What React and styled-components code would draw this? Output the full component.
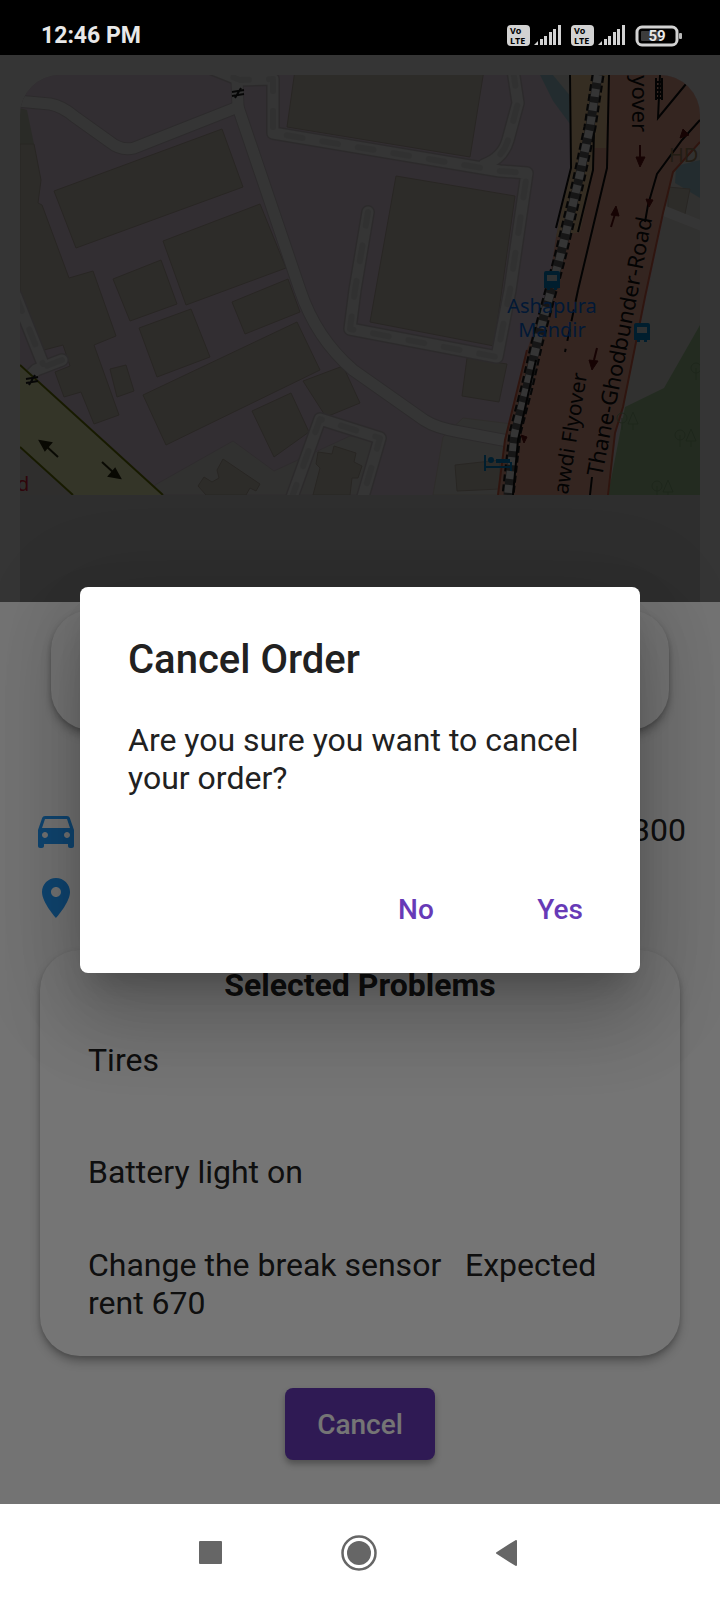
import React from "react";
import styled, { createGlobalStyle } from "styled-components";

const GlobalStyle = createGlobalStyle`
  * { box-sizing: border-box; }
  body {
    margin: 0;
    font-family: Roboto, "Liberation Sans", sans-serif;
    color: #212121;
  }
  h1, h2, p, ul { margin: 0; padding: 0; }
  ul { list-style: none; }
  button { font: inherit; border: 0; cursor: pointer; }
`;

const Screen = styled.div`
  min-height: 100vh;
  display: flex;
  flex-direction: column;
  background: #fff;
`;

const StatusBar = styled.header`
  display: flex;
  align-items: center;
  justify-content: space-between;
  height: 55px;
  padding: 16px 37px 0 41px;
  background: #000;
  color: #e8e8e8;
  font-size: 23px;
  font-weight: 700;
`;

const StatusIcons = styled.div`
  display: flex;
  align-items: center;
  gap: 9px;
`;

const SimGroup = styled.div`
  display: flex;
  align-items: center;
  gap: 4px;
`;

const Body = styled.main`
  position: relative;
  flex: 1;
  display: flex;
  flex-direction: column;
  overflow: hidden;
`;

const MapSection = styled.section`
  position: relative;
  padding: 20px 20px 0;
  background: #fafafa;
`;

const MapFrame = styled.div`
  overflow: hidden;
  border-radius: 40px 40px 0 0;
  background: #dddddd;
  padding-bottom: 107px;

  svg { display: block; width: 100%; height: auto; }
`;

const Veil = styled.div`
  position: absolute;
  inset: 0;
  background: rgba(0, 0, 0, 0.54);
`;

const Sheet = styled.section`
  flex: 1;
  display: flex;
  flex-direction: column;
  align-items: stretch;
  padding-top: 8px;
  background: #fafafa;
`;

const Card = styled.div`
  margin: 0 ${(p) => p.$inset}px;
  min-height: 120px;
  padding: ${(p) => p.$pad || 0}px 0;
  border-radius: 40px;
  background: #fff;
  box-shadow: 0 6px 10px rgba(0, 0, 0, 0.26), 0 2px 4px rgba(0, 0, 0, 0.14);
`;

const Details = styled.div`
  display: flex;
  flex-direction: column;
  gap: 20px;
  padding: 76px 34px 28px 32px;
`;

const DetailRow = styled.div`
  display: flex;
  align-items: center;
  justify-content: space-between;
  height: 48px;
  font-size: 32px;
`;

const BlueIcon = styled.svg`
  width: 48px;
  height: 48px;
  fill: #2196f3;
`;

const CardTitle = styled.h2`
  font-size: 32px;
  line-height: 38px;
  font-weight: 700;
  text-align: center;
`;

const Problem = styled.li`
  display: flex;
  align-items: center;
  min-height: 112px;
  padding: 0 48px;
  font-size: 32px;
  line-height: 38px;
  white-space: pre-wrap;
`;

const CancelButton = styled.button`
  align-self: center;
  margin: 32px 0 43px;
  height: 72px;
  padding: 0 32px;
  border-radius: 8px;
  background: #673ab7;
  color: #fff;
  font-size: 28px;
  font-weight: 500;
  box-shadow: 0 4px 6px rgba(0, 0, 0, 0.3);
`;

const Scrim = styled.div`
  position: absolute;
  inset: 0;
  display: flex;
  align-items: center;
  justify-content: center;
  padding: 0 80px;
  background: rgba(0, 0, 0, 0.54);
`;

const Dialog = styled.div`
  width: 100%;
  border-radius: 8px;
  background: #fff;
  box-shadow: 0 22px 30px -14px rgba(0, 0, 0, 0.2),
    0 48px 76px 6px rgba(0, 0, 0, 0.14), 0 18px 92px 16px rgba(0, 0, 0, 0.12);
`;

const DialogTitle = styled.h1`
  padding: 48px 48px 0;
  font-size: 40px;
  line-height: 50px;
  font-weight: 500;
`;

const DialogText = styled.p`
  padding: 36px 48px 49px;
  font-size: 32px;
  line-height: 38px;
`;

const DialogActions = styled.div`
  display: flex;
  justify-content: flex-end;
  gap: 16px;
  padding: 16px 16px 15px;
`;

const TextButton = styled.button`
  width: 128px;
  height: 96px;
  background: transparent;
  color: #673ab7;
  font-size: 28px;
  font-weight: 500;
`;

const NavBar = styled.nav`
  display: flex;
  align-items: center;
  justify-content: center;
  gap: 100px;
  height: 96px;
  padding: 2px 2px 0 0;
  background: #fff;
`;

const NavButton = styled.button`
  display: flex;
  align-items: center;
  justify-content: center;
  width: 48px;
  height: 48px;
  padding: 0;
  background: transparent;
`;

const Sim = () => (
  <SimGroup>
    <svg width="23" height="21" viewBox="0 0 23 21" aria-label="VoLTE">
      <rect width="23" height="21" rx="4" fill="#d2d2d2" />
      <g fontFamily="Open Sans, sans-serif" fontWeight="700" fill="#000">
        <text x="3" y="9" fontSize="9">Vo</text>
        <text x="3" y="19" fontSize="9">LTE</text>
      </g>
    </svg>
    <svg width="28" height="21" viewBox="0 0 28 21" fill="#d2d2d2">
      <path d="M0 20L4 16V20Z" />
      <rect x="6" y="14" width="3" height="6" />
      <rect x="10" y="11" width="3" height="9" />
      <rect x="15" y="7" width="3" height="13" />
      <rect x="19" y="4" width="3" height="16" />
      <rect x="24" y="0" width="3" height="20" />
    </svg>
  </SimGroup>
);

const Battery = () => (
  <svg width="48" height="22" viewBox="0 0 48 22" aria-label="Battery 59 percent">
    <rect x="2" y="2" width="40" height="18" rx="5" fill="none" stroke="#d2d2d2" strokeWidth="3" />
    <rect x="6" y="6" width="19" height="10" rx="1" fill="#3c3c3c" />
    <rect x="44" y="8" width="3" height="6" rx="1" fill="#b8b8b8" />
    <text x="22" y="16" textAnchor="middle" fontSize="15" fontWeight="700" fill="#e8e8e8" fontFamily="Roboto, sans-serif">59</text>
  </svg>
);

const buildings = [
  "20,144 34,144 41,180 38,203 42,205 69,278 93,271 116,336 94,345 119,415 94,424 81,392 64,397 55,372 70,366 63,345 44,350 22,298 20,290",
  "54,191 222,129 243,187 76,248",
  "163,241 260,204 286,268 186,305",
  "113,279 161,260 177,304 130,321",
  "139,328 191,309 210,357 157,377",
  "232,302 288,279 300,312 245,334",
  "143,395 297,322 320,370 166,445",
  "110,369 126,365 134,391 117,397",
  "303,381 343,366 360,403 326,417",
  "252,411 291,393 309,432 274,457",
  "198,486 204,477 212,482 219,478 217,470 223,459 260,484 256,491 250,488 246,495 206,495",
  "318,452 332,454 334,446 356,453 354,462 362,466 358,478 352,478 350,495 313,495 320,468 316,464",
  "295,70 484,70 470,157 287,127",
  "396,176 515,196 494,346 370,322",
  "467,358 507,364 499,402 462,396",
  "455,465 500,460 500,489 457,491",
  "668,187 690,189 685,214 668,210",
];

const tracks = [
  "M200 64L240 80L273 79L273 133L500 171L527 173L510 290L497 357L350 329L355 290L368 212",
  "M513 70L518 103L508 140Q503 158 484 165",
  "M291 500L320 419L380 438L362 500",
  "M16 296L43 364M62 360L36 370L28 378",
];

const streets = [
  "M16 101L50 104Q62 106 75 117L110 142Q121 151 134 148L238 107",
  "M237 80L238 107L300 290Q316 338 353 370L424 420Q436 428 460 432L508 441",
];

const railway = "M598 75L590 127L578 183L560 257L543 320L537 343L527 387L515 433L508 495";

const Stop = ({ x, y }) => (
  <g transform={`translate(${x} ${y})`}>
    <path d="M2 0H14Q16 0 16 2V17H13V19H10V17H6V19H3V17H0V2Q0 0 2 0Z" fill="#0092da" />
    <rect x="3" y="4" width="10" height="6" fill="#dcebf0" />
  </g>
);

const Tree = ({ x, y }) => (
  <g transform={`translate(${x} ${y})`} fill="none" stroke="#8fb480" strokeWidth="1">
    <circle cx="0" cy="0" r="5" />
    <path d="M0 0V12M11 -6L6 6H16ZM11 6V12" />
  </g>
);

const Map = () => (
  <svg viewBox="20 75 680 420" role="img" aria-label="Map">
    <rect x="20" y="75" width="680" height="420" fill="#efd9ee" />
    <path d="M20 108L27 110L34 144H20Z" fill="#c9cfbc" />
    <path d="M155 495V485L233 441L274 471L350 436L382 440L362 495Z" fill="#ece9e4" stroke="#dccfd8" />
    <path d="M463 418L512 424L500 495H433L443 437Z" fill="#ece9e4" stroke="#ddd5cc" />
    <path d="M540 75H570V124L553 101Z" fill="#aad3df" />
    <path d="M553 75H572V98Z" fill="#ece9e4" />
    <path d="M700 135L673 172L605 495H700Z" fill="#ece9e4" />
    <path d="M676 166L700 160V198L675 183Z" fill="#aad3df" />
    <path d="M700 325L664 388L625 407L608 495H700Z" fill="#a6d09c" />
    <g fill="#d7d1c5" stroke="#bfb5a8" strokeWidth="1">
      {buildings.map((p) => <polygon key={p} points={p} />)}
    </g>
    <g fill="none" strokeLinejoin="round" strokeLinecap="round">
      {tracks.map((d) => <path key={d} d={d} stroke="#d2cbd0" strokeWidth="14" />)}
      {streets.map((d) => <path key={d} d={d} stroke="#d2cbd0" strokeWidth="13" />)}
      {tracks.map((d) => <path key={d + "f"} d={d} stroke="#fafafa" strokeWidth="11" />)}
      {streets.map((d) => <path key={d + "f"} d={d} stroke="#fefefe" strokeWidth="11" />)}
      {tracks.map((d) => <path key={d + "d"} d={d} stroke="#ebebeb" strokeWidth="6" strokeDasharray="16 20" />)}
      <path d="M662 210L702 226" stroke="#fefefe" strokeWidth="10" />
    </g>

    <path d="M20 447L73 495H20Z" fill="#e0dbd8" />
    <path d="M20 365L163 495H73L20 447Z" fill="#f7fabf" />
    <path d="M20 365L163 495M73 495L20 447" stroke="#707d05" strokeWidth="2" fill="none" />
    <g stroke="#2c2c10" fill="#2c2c10" strokeWidth="2">
      <path d="M58 457L46 446" /><path d="M40 441L51 443L45 450Z" />
      <path d="M102 462L114 473" /><path d="M120 478L109 476L115 469Z" />
    </g>
    <g stroke="#222" strokeWidth="2" fill="none">
      <path d="M232 92L244 90M232 96L244 94M235 98L241 88M26 379L38 377M26 383L38 381M29 385L35 375" />
    </g>

    <path d="M590 75H700V142L673 172L663 213L645 297L623 407L615 433L608 495H498L505 440L527 350L548 290L556 237Z" fill="#f9b29c" />
    <path d="M700 142L673 172L663 213L645 297L623 407L615 433L608 495M498 495L505 440L527 350" fill="none" stroke="#e0664a" strokeWidth="2" />
    <path d="M569 75H608L606 148H594V167L580 232L556 237L571 168Z" fill="#fcd6a4" />
    <g fill="none" stroke="#111" strokeWidth="2">
      <path d="M570 75L571 168L556 228" />
      <path d="M609 75L607 168L578 290" />
      <path d="M578 290L565 352" strokeDasharray="12 8" />
      <path d="M594 130L593 170L578 232" />
      <path d="M660 75L658 118L686 84M700 120L682 140L657 174L648 205L645 222M592 477L590 495" />
      <path d="M656 78V100M662 78V100M656 82H662M656 86H662M656 90H662M656 94H662M656 98H662" />
    </g>
    <path d={railway} fill="none" stroke="#222" strokeWidth="13" strokeDasharray="7 3" />
    <path d={railway} fill="none" stroke="#6a6a6a" strokeWidth="9" />
    <path d={railway} fill="none" stroke="#fafafa" strokeWidth="8" strokeDasharray="8 6" />
    <path d="M536 360L528 395L518 440L513 495" fill="none" stroke="#111" strokeWidth="2" />
    <g stroke="#6b1210" fill="#6b1210" strokeWidth="1">
      <path d="M640 145V158" strokeWidth="2" /><path d="M640 167L636 157H645Z" />
      <path d="M611 227L615 214" strokeWidth="2" /><path d="M616 206L611 215L619 216Z" />
      <path d="M597 348L594 360" strokeWidth="2" /><path d="M592 370L589 360L598 361Z" />
      <path d="M680 138L683 129L689 135Z" /><path d="M649 207L646 199L653 200Z" />
      <path d="M524 443L521 435L527 437Z" />
    </g>

    <Stop x="544" y="271" />
    <Stop x="634" y="323" />
    <g stroke="#0092da" fill="none" strokeWidth="2">
      <path d="M485 455V471M485 467H512M511 462V471" />
      <path d="M496 461H510" strokeWidth="4" />
      <circle cx="491" cy="460" r="2" fill="#0092da" />
    </g>
    <Tree x="680" y="435" />
    <Tree x="657" y="486" />
    <Tree x="696" y="368" />
    <Tree x="622" y="418" />

    <g fontFamily="Noto Sans, sans-serif" fontSize="22" fill="#111">
      <text transform="translate(632 132) rotate(90)" textAnchor="end">yover</text>
      <text transform="translate(587 374) rotate(-81)" textAnchor="end" fontSize="21">awdi Flyover</text>
      <text transform="translate(602 477) rotate(-79)">Thane-Ghodbunder-Road</text>
      <g fontSize="20" fill="#0a78ff" stroke="#0a78ff" strokeWidth="0" textAnchor="middle">
        <text x="552" y="313">Ashapura</text>
        <text x="552" y="337">Mandir</text>
      </g>
      <text x="669" y="162" fontSize="20" fill="#a98a60">HDF</text>
      <text x="17" y="491" fontSize="20" fill="#e0203a">d</text>
    </g>
  </svg>
);

export default function App() {
  return (
    <Screen>
      <GlobalStyle />
      <StatusBar>
        <span>12:46 PM</span>
        <StatusIcons>
          <Sim />
          <Sim />
          <Battery />
        </StatusIcons>
      </StatusBar>

      <Body>
        <MapSection>
          <MapFrame>
            <Map />
          </MapFrame>
          <Veil />
        </MapSection>

        <Sheet>
          <Card $inset={51} />
          <Details>
            <DetailRow>
              <BlueIcon viewBox="0 0 24 24" aria-hidden="true">
                <path d="M18.92 6.01C18.72 5.42 18.16 5 17.5 5h-11c-.66 0-1.21.42-1.42 1.01L3 12v8c0 .55.45 1 1 1h1c.55 0 1-.45 1-1v-1h12v1c0 .55.45 1 1 1h1c.55 0 1-.45 1-1v-8l-2.08-5.99zM6.5 16c-.83 0-1.5-.67-1.5-1.5S5.67 13 6.5 13s1.5.67 1.5 1.5S7.33 16 6.5 16zm11 0c-.83 0-1.5-.67-1.5-1.5s.67-1.5 1.5-1.5 1.5.67 1.5 1.5-.67 1.5-1.5 1.5zM5 11l1.5-4.5h11L19 11H5z" />
              </BlueIcon>
              <span>300</span>
            </DetailRow>
            <DetailRow>
              <BlueIcon viewBox="0 0 24 24" aria-hidden="true">
                <path d="M12 2C8.13 2 5 5.13 5 9c0 5.25 7 13 7 13s7-7.75 7-13c0-3.87-3.13-7-7-7zm0 9.5c-1.38 0-2.5-1.12-2.5-2.5s1.12-2.5 2.5-2.5 2.5 1.12 2.5 2.5-1.12 2.5-2.5 2.5z" />
              </BlueIcon>
            </DetailRow>
          </Details>
          <Card $inset={40} $pad={16}>
            <CardTitle>Selected Problems</CardTitle>
            <ul>
              <Problem>Tires</Problem>
              <Problem>Battery light on</Problem>
              <Problem>{"Change the break sensor   Expected rent 670"}</Problem>
            </ul>
          </Card>
          <CancelButton type="button">Cancel</CancelButton>
        </Sheet>

        <Scrim>
          <Dialog role="alertdialog" aria-modal="true" aria-labelledby="dialog-title" aria-describedby="dialog-text">
            <DialogTitle id="dialog-title">Cancel Order</DialogTitle>
            <DialogText id="dialog-text">Are you sure you want to cancel your order?</DialogText>
            <DialogActions>
              <TextButton type="button">No</TextButton>
              <TextButton type="button">Yes</TextButton>
            </DialogActions>
          </Dialog>
        </Scrim>
      </Body>

      <NavBar>
        <NavButton type="button" aria-label="Recent apps">
          <svg width="24" height="24" viewBox="0 0 24 24" fill="#666">
            <rect width="23" height="23" rx="1" />
          </svg>
        </NavButton>
        <NavButton type="button" aria-label="Home">
          <svg width="36" height="36" viewBox="0 0 36 36">
            <circle cx="18" cy="18" r="16.5" fill="none" stroke="#666" strokeWidth="2.5" />
            <circle cx="18" cy="18" r="12" fill="#666" />
          </svg>
        </NavButton>
        <NavButton type="button" aria-label="Back">
          <svg width="26" height="26" viewBox="0 0 26 26">
            <path d="M3 13L22 1V25Z" fill="#666" stroke="#666" strokeWidth="2" strokeLinejoin="round" />
          </svg>
        </NavButton>
      </NavBar>
    </Screen>
  );
}
